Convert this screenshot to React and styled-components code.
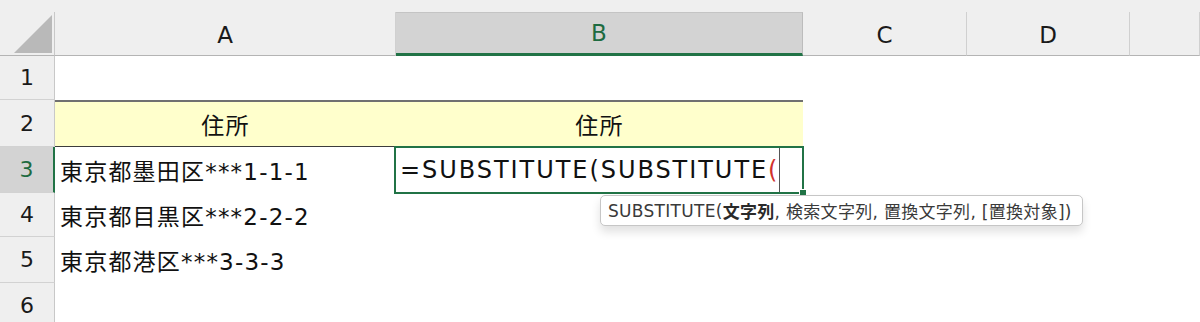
import React from "react";
import styled, { createGlobalStyle } from "styled-components";

const GlobalStyle = createGlobalStyle`
  html, body {
    margin: 0;
    padding: 0;
    background: #ffffff;
    overflow: hidden;
  }
  body {
    font-family: "DejaVu Sans", "Noto Sans CJK JP", sans-serif;
  }
`;

const COLUMNS = [
  { key: "A" },
  { key: "B", active: true },
  { key: "C" },
  { key: "D" },
  { key: "E" },
];

const ROWS = [
  { n: 1 },
  { n: 2, header: true, cells: ["住所", "住所"] },
  { n: 3, active: true, cells: ["東京都墨田区***1-1-1"] },
  { n: 4, cells: ["東京都目黒区***2-2-2"] },
  { n: 5, cells: ["東京都港区***3-3-3"] },
  { n: 6 },
];

const App = () => {
  return (
    <>
      <GlobalStyle />
      <Page>
        <TopStrip />
        <Sheet>
          <Corner>
            <CornerTriangle />
          </Corner>
          {COLUMNS.map((col) => (
            <ColHeader key={col.key} $active={col.active}>
              {col.key === "E" ? "" : col.key}
            </ColHeader>
          ))}

          {ROWS.map((row) => (
            <React.Fragment key={row.n}>
              <RowHeader $active={row.active}>{row.n}</RowHeader>
              {COLUMNS.map((col, i) => {
                const isFormula = row.active && col.key === "B";
                const inTable = row.header && (col.key === "A" || col.key === "B");
                return (
                  <Cell
                    key={col.key}
                    $header={inTable}
                    $selected={isFormula}
                    $center={row.header}
                  >
                    {isFormula ? (
                      <>
                        <FormulaText>
                          =SUBSTITUTE(SUBSTITUTE<Paren>(</Paren>
                        </FormulaText>
                        <Caret />
                        <FillHandle />
                      </>
                    ) : (
                      row.cells && row.cells[i]
                    )}
                  </Cell>
                );
              })}
            </React.Fragment>
          ))}
        </Sheet>

        <Tooltip>
          SUBSTITUTE(<b>文字列</b>, 検索文字列, 置換文字列, [置換対象])
        </Tooltip>
      </Page>
    </>
  );
};

export default App;

const Page = styled.div`
  position: relative;
  width: 1200px;
  height: 322px;
  overflow: hidden;
  background: #ffffff;
`;

const TopStrip = styled.div`
  height: 12px;
  background: #efefef;
`;

const Sheet = styled.div`
  display: grid;
  grid-template-columns: 55px 341px 407px 164px 163px 70px;
  grid-template-rows: 44px 44px 47px 46px 44px 46px 46px;
`;

const Corner = styled.div`
  position: relative;
  background: #efefef;
  border-right: 1px solid #c8c8c8;
  border-bottom: 1px solid #b4b4b4;
  box-sizing: border-box;
`;

const CornerTriangle = styled.div`
  position: absolute;
  left: 14px;
  top: 3px;
  width: 38px;
  height: 38px;
  background: #b9b9b9;
  clip-path: polygon(100% 0, 100% 100%, 0 100%);
`;

const ColHeader = styled.div`
  box-sizing: border-box;
  display: flex;
  align-items: center;
  justify-content: center;
  font-size: 23px;
  color: ${(p) => (p.$active ? "#1e6b41" : "#1a1a1a")};
  background: ${(p) => (p.$active ? "#d3d3d3" : "#efefef")};
  border-right: 1px solid ${(p) => (p.$active ? "#bcbcbc" : "#d0d0d0")};
  border-top: ${(p) => (p.$active ? "1px solid #c4c4c4" : "none")};
  border-bottom: ${(p) => (p.$active ? "3px solid #217346" : "1px solid #b4b4b4")};
  padding-top: ${(p) => (p.$active ? "0" : "2px")};
`;

const RowHeader = styled.div`
  box-sizing: border-box;
  display: flex;
  align-items: center;
  justify-content: center;
  font-size: 22px;
  color: ${(p) => (p.$active ? "#1e6b41" : "#1a1a1a")};
  background: ${(p) => (p.$active ? "#d3d3d3" : "#efefef")};
  border-bottom: 1px solid #d2d2d2;
  border-right: ${(p) => (p.$active ? "2px solid #217346" : "1px solid #c8c8c8")};
`;

const Cell = styled.div`
  position: relative;
  box-sizing: border-box;
  display: flex;
  align-items: center;
  justify-content: ${(p) => (p.$center ? "center" : "flex-start")};
  padding: 0 5px;
  font-size: 23px;
  letter-spacing: 1.2px;
  color: #111;
  white-space: nowrap;
  background: ${(p) => (p.$header ? "#ffffcc" : "#ffffff")};
  border-top: ${(p) => (p.$header ? "2px solid #707070" : "none")};
  border-bottom: ${(p) => (p.$header ? "1px solid #3c3c3c" : "none")};
  ${(p) =>
    p.$selected &&
    `
    outline: 2px solid #217346;
    outline-offset: -1px;
    margin-left: -1px;
    z-index: 2;
  `}
`;

const FormulaText = styled.span`
  font-size: 24px;
  color: #111;
  letter-spacing: 1.95px;
`;

const Paren = styled.span`
  color: #d0312d;
`;

const Caret = styled.span`
  align-self: stretch;
  width: 1px;
  background: #555;
`;

const FillHandle = styled.span`
  position: absolute;
  right: -4px;
  bottom: -4px;
  width: 6px;
  height: 6px;
  background: #217346;
  border: 1px solid #ffffff;
`;

const Tooltip = styled.div`
  position: absolute;
  left: 600px;
  top: 195px;
  height: 31px;
  box-sizing: border-box;
  display: flex;
  align-items: center;
  padding: 0 10px 0 7px;
  font-size: 17px;
  letter-spacing: 0.3px;
  color: #3a3a3a;
  white-space: pre;
  background: #ffffff;
  border: 1px solid #c6c6c6;
  border-radius: 5px;
  box-shadow: 0 6px 10px rgba(0, 0, 0, 0.12);
  z-index: 5;

  b {
    font-weight: 700;
    color: #2a2a2a;
  }
`;
